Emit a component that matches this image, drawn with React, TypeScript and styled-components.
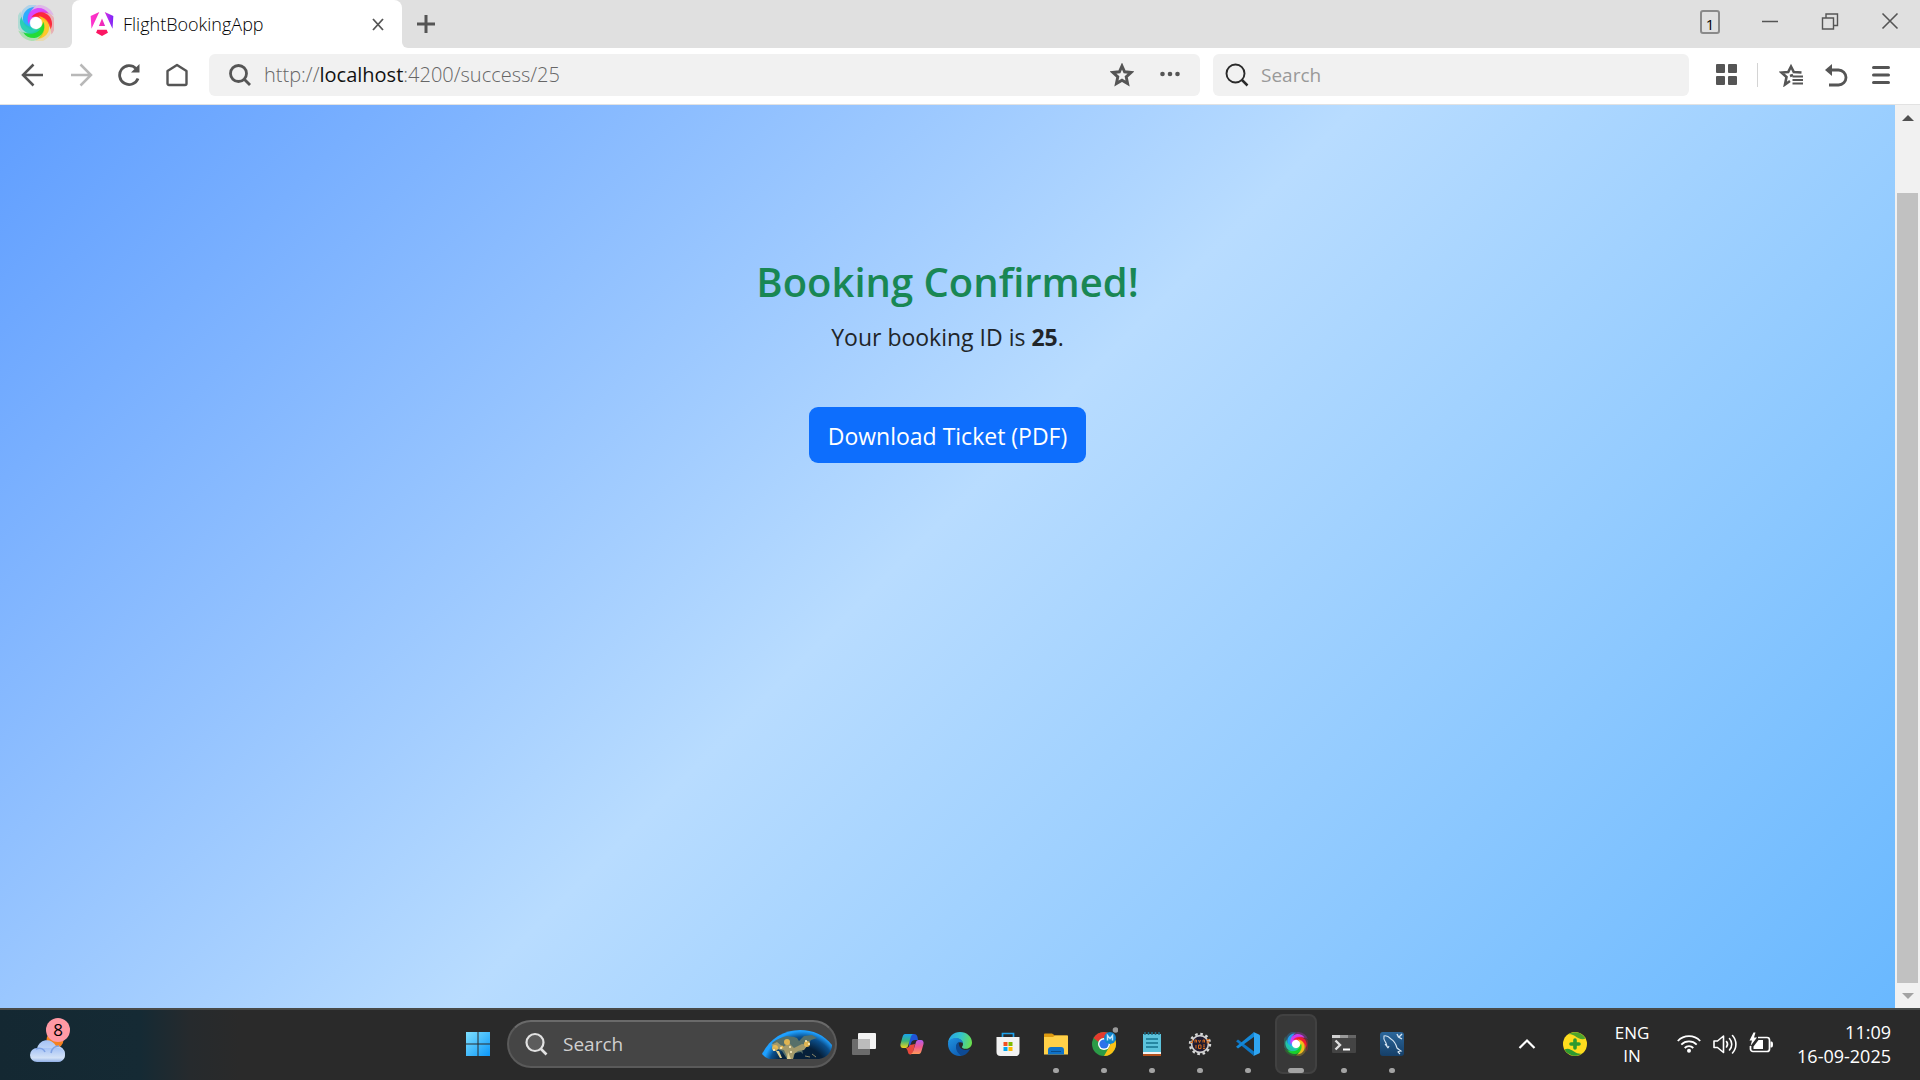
import React from "react";
import styled, { createGlobalStyle, css } from "styled-components";

const uiFont = '"Open Sans", "Noto Sans", sans-serif';

const GlobalStyle = createGlobalStyle`
  *, *::before, *::after { box-sizing: border-box; }
  body { margin: 0; font-family: ${uiFont}; }
  button, input { font: inherit; color: inherit; }
  svg { display: block; flex: none; }
`;

const Screen = styled.div`
  display: flex;
  flex-direction: column;
  height: 100vh;
  overflow: hidden;
`;

const PlainButton = styled.button`
  display: flex;
  align-items: center;
  justify-content: center;
  padding: 0;
  border: 0;
  background: none;
  cursor: pointer;
`;

/* ---------- Tab strip ---------- */

const TabStrip = styled.header`
  display: flex;
  height: 48px;
  background: #ffffff;
`;

const LogoCell = styled(PlainButton)`
  width: 72px;
  background: #e0e0e0;
  border-bottom-right-radius: 6px;
  padding-bottom: 2px;
`;

const Tab = styled.div`
  display: flex;
  align-items: center;
  width: 330px;
  padding: 0 12px 0 18px;
  background: #ffffff;
  border-radius: 8px 8px 0 0;
`;

const TabSlot = styled.div`
  display: flex;
  background: linear-gradient(#e0e0e0 50%, #ffffff 50%);
`;

const TabTitle = styled.span`
  flex: 1;
  margin-left: 9px;
  font-size: 18px;
  font-weight: 300;
  line-height: 24px;
  color: #000000;
`;

const StripRest = styled.div`
  display: flex;
  flex: 1;
  justify-content: space-between;
  background: #e0e0e0;
  border-bottom-left-radius: 6px;
`;

const StripButton = styled(PlainButton)`
  width: 48px;
`;

const WindowControls = styled.div`
  display: flex;
  height: 44px;
  align-items: center;
`;

const WindowButton = styled(PlainButton)`
  width: 60px;
  height: 44px;
`;

const TabCount = styled.span`
  display: flex;
  align-items: center;
  justify-content: center;
  width: 20px;
  height: 24px;
  padding-top: 4px;
  border: 2px solid #8a8a8a;
  border-radius: 3px;
  font-size: 15px;
  line-height: 16px;
  color: #000000;
`;

/* ---------- Toolbar ---------- */

const Toolbar = styled.nav`
  display: flex;
  align-items: center;
  height: 57px;
  padding: 0 17px 3px 9px;
  background: #ffffff;
  border-bottom: 1px solid #e2e2e2;
`;

const NavButton = styled(PlainButton)`
  width: 48px;
  height: 42px;
`;

const ToolButton = styled(PlainButton)`
  width: 45px;
  height: 42px;
`;

const Field = styled.div<{ $grow: number }>`
  display: flex;
  align-items: center;
  flex: ${(p) => p.$grow} 1 0;
  height: 42px;
  border-radius: 6px;
  background: #f1f1f1;
`;

const AddressField = styled(Field)`
  margin: 0 13px 0 8px;
  padding: 0 6px 0 19px;
`;

const Address = styled.div`
  flex: 1;
  margin-left: 12px;
  font-size: 20px;
  font-weight: 300;
  line-height: 28px;
  color: #666666;
  white-space: nowrap;
  outline: none;
`;

const Host = styled.span`
  color: #111111;
  font-weight: 400;
`;

const SearchField = styled(Field)`
  padding-left: 12px;
  margin-right: 14px;
`;

const SearchInput = styled.input`
  flex: 1;
  min-width: 0;
  margin-left: 12px;
  padding: 0;
  border: 0;
  outline: 0;
  background: none;
  font-size: 19px;
  line-height: 28px;
  &::placeholder { color: #999999; opacity: 1; }
`;

const Divider = styled.span`
  width: 1px;
  height: 24px;
  margin: 0 10px 0 6px;
  background: #d4d4d4;
`;

/* ---------- Page ---------- */

const Viewport = styled.div`
  display: flex;
  flex: 1;
  min-height: 0;
`;

const Page = styled.main`
  display: flex;
  flex: 1;
  flex-direction: column;
  align-items: center;
  padding-top: 141px;
  background: linear-gradient(135deg, #5a9aff, #b8dcff, #69b8ff) bottom / 100% calc(100% + 82px);
`;

const Heading = styled.h1`
  margin: 0;
  font-size: 40px;
  font-weight: 600;
  line-height: 72px;
  color: #198754;
`;

const Message = styled.p`
  margin: 0;
  font-size: 23px;
  line-height: 38px;
  color: #212529;
`;

const DownloadButton = styled.button`
  height: 56px;
  margin-top: 51px;
  padding: 2px 19px 0;
  border: 0;
  border-radius: 9px;
  background: #0d6efd;
  color: #ffffff;
  font-size: 23px;
  line-height: 38px;
  cursor: pointer;
`;

const ScrollBar = styled.div`
  display: flex;
  flex-direction: column;
  align-items: center;
  width: 25px;
  background: #f1f1f1;
`;

const ScrollArrow = styled(PlainButton)`
  width: 25px;
  height: 25px;
`;

const ScrollTrack = styled.div`
  display: flex;
  flex: 1;
  align-items: flex-end;
`;

const ScrollThumb = styled.div`
  width: 21px;
  height: 92.6%;
  background: #c1c1c1;
`;

/* ---------- Taskbar ---------- */

const Taskbar = styled.footer`
  display: grid;
  grid-template-columns: 1fr auto 1fr;
  height: 72px;
  padding-bottom: 2px;
  border-top: 2px solid #484a49;
  background: linear-gradient(90deg, #142832 0, #152a34 140px, #262a2d 190px, #2a2a2a 240px);
  color: #ffffff;
`;

const WeatherArea = styled.div`
  display: flex;
  padding-left: 24px;
`;

const WeatherButton = styled(PlainButton)`
  position: relative;
  width: 48px;
`;

const WeatherBadge = styled.span`
  position: absolute;
  top: 8px;
  left: 22px;
  width: 24px;
  height: 24px;
  border-radius: 50%;
  background: #ff99a4;
  color: #000000;
  font-size: 17px;
  line-height: 24px;
  text-align: center;
`;

const AppList = styled.div`
  display: flex;
  align-items: center;
  margin-right: 50px;
`;

const activeTile = css`
  &::before {
    content: "";
    position: absolute;
    inset: 4px 3px;
    border: 2px solid #414141;
    border-radius: 8px;
    background: #383838;
  }
`;

const AppButton = styled(PlainButton)<{ $state?: "open" | "active" }>`
  position: relative;
  width: 48px;
  height: 68px;
  ${(p) => p.$state === "active" && activeTile}
  &::after {
    content: "";
    display: ${(p) => (p.$state ? "block" : "none")};
    position: absolute;
    bottom: 5px;
    width: ${(p) => (p.$state === "active" ? 16 : 6)}px;
    height: 5px;
    border-radius: 3px;
    background: #a3a3a3;
  }
  svg { position: relative; }
`;

const TaskSearch = styled.label`
  display: flex;
  align-items: center;
  width: 330px;
  height: 48px;
  margin: 0 3px 0 5px;
  padding: 0 3px 0 15px;
  border: 2px solid #5a5a5a;
  border-top-color: #6a6a6a;
  border-radius: 24px;
  background: #454545;
`;

const TaskSearchInput = styled.input`
  flex: 1;
  min-width: 0;
  margin-left: 15px;
  padding: 0;
  border: 0;
  outline: 0;
  background: none;
  font-size: 19px;
  line-height: 28px;
  &::placeholder { color: #d0d0d0; opacity: 1; }
`;

const Tray = styled.div`
  display: flex;
  align-items: center;
  justify-content: flex-end;
  padding-right: 29px;
`;

const TrayButton = styled(PlainButton)<{ $width: number }>`
  width: ${(p) => p.$width}px;
  height: 60px;
`;

const Language = styled(TrayButton)`
  margin-right: 6px;
  flex-direction: column;
  font-size: 17px;
  line-height: 23px;
`;

const Clock = styled(Language)`
  margin-right: 0;
  align-items: flex-end;
  font-size: 18px;
  line-height: 24px;
  white-space: nowrap;
`;

/* ---------- Icons ---------- */

const ink = "#555555";

const SwirlLogo = ({ size, id }: { size: number; id: string }) => (
  <svg width={size} height={size} viewBox="0 0 36 36" aria-hidden="true">
    <defs>
      <radialGradient id={id}>
        <stop offset="0.5" stopColor="#fff" />
        <stop offset="1" stopColor="#fff" stopOpacity="0" />
      </radialGradient>
    </defs>
    <circle cx="18" cy="18" r="8" fill="#ffffff" />
    {["#1ea8ff", "#d93cff", "#ff1a30", "#ffc61a", "#16dc28", "#1fcdb0"].map((c, i) => (
      <g key={c} fill={c} transform={`rotate(${i * 60 - 62} 18 18)`}>
        <path fillOpacity="0.25" d="M10 18C8 9 13 1 22 0 29 1 34 5 36 11 30 8 23 7 18 12 15 12 12 14 10 18Z" />
        <path fillOpacity="0.9" d="M10.500 19C8 10 13 4 20 3 25 3 29 5 31 9 26 7 20 8 17 12 14 13 12 15 10.500 19Z" />
      </g>
    ))}
    <circle cx="18" cy="18" r="7" fill={`url(#${id})`} />
  </svg>
);

const AngularIcon = () => (
  <svg width="24" height="24" viewBox="0 0 24 24" aria-hidden="true">
    <defs>
      <linearGradient id="ng" x1="0" y1="0" x2="24" y2="0" gradientUnits="userSpaceOnUse">
        <stop offset="0" stopColor="#ff35d2" />
        <stop offset="0.5" stopColor="#f52ab4" />
        <stop offset="0.75" stopColor="#b52cf0" />
        <stop offset="1" stopColor="#7024f8" />
      </linearGradient>
    </defs>
    <path fill="url(#ng)" d="M14.692 0l7.832 16.855.814-12.856L14.692 0ZM9.308 0 .662 3.999l.814 12.856L9.308 0ZM8.903 13.930h6.198L12 6.396 8.903 13.930Z" />
    <path fill="#fb1763" d="M16.712 17.711H7.288l-1.204 2.916L12 24l5.916-3.373-1.204-2.916Z" />
  </svg>
);

const Glyph = ({ size = 24, w = 2, color = ink, children }: { size?: number; w?: number; color?: string; children: React.ReactNode }) => (
  <svg width={size} height={size} viewBox="0 0 24 24" fill="none" stroke={color} strokeWidth={w} aria-hidden="true">
    {children}
  </svg>
);

const CloudIcon = () => (
  <svg width="38" height="38" viewBox="0 0 38 38" aria-hidden="true">
    <defs>
      <linearGradient id="cloud" x1="0" y1="0" x2="0" y2="1">
        <stop offset="0" stopColor="#a5c2f5" />
        <stop offset="0.7" stopColor="#d3e2f7" />
        <stop offset="1" stopColor="#8eaee6" />
      </linearGradient>
    </defs>
    <circle cx="26" cy="15" r="8.500" fill="#f58220" />
    <path fill="url(#cloud)" d="M10 37a9 9 0 0 1-2-13A10 10 0 0 1 27 21a8 8 0 0 1 9 8 8 8 0 0 1-8 8Z" />
    <rect x="1" y="23" width="35" height="14" rx="7" fill="url(#cloud)" />
    <path d="M22 28c1-5 4-7 8-7M7 24c4-2 8 0 9 3" fill="none" stroke="#7ea2e4" strokeWidth="1.500" />
  </svg>
);

const WindowsIcon = () => (
  <svg width="24" height="24" viewBox="0 0 24 24" aria-hidden="true">
    <defs>
      <linearGradient id="win" x1="0" y1="0" x2="24" y2="24" gradientUnits="userSpaceOnUse">
        <stop offset="0" stopColor="#7fe0ff" />
        <stop offset="1" stopColor="#0c97f8" />
      </linearGradient>
    </defs>
    <path fill="url(#win)" d="M0 0h11.500v11.500H0zM12.500 0H24v11.500H12.500zM0 12.500h11.500V24H0zM12.500 12.500H24V24H12.500z" />
  </svg>
);

const EarthIcon = () => (
  <svg width="70" height="30" viewBox="0 0 70 30" aria-hidden="true">
    <defs>
      <radialGradient id="sea" gradientUnits="userSpaceOnUse" cx="40" cy="42" r="40">
        <stop offset="0.6" stopColor="#06203a" />
        <stop offset="0.85" stopColor="#0b4f8c" />
        <stop offset="1" stopColor="#1fa0ff" />
      </radialGradient>
    </defs>
    <path fill="url(#sea)" d="M0 25C8 9 22 1 38 1c13 0 24 5 32 15 0 6-5 13-13 14H7C4 29 2 27 0 25Z" />
    <path fill="#56706a" d="M10 14c5-4 10-6 15-7 4 1 6 0 10 2l2 3 5-5 8-1 5 3-6 2-3 5-3 3-3 1 1 5-2-2-6 1-2 6h-6l-5-8-7-3Z" />
    <path fill="#a39a6b" d="m9 16 6-3 6 5 6-4 5 5 8-4 6 1-4 5-6 1-4 3-1 5h-5l-4-9-6-1Z" />
    <path fill="#e0cf93" d="m14 22 4 7h2l-3-7ZM26 23l3 7h-4Z" />
    <g fill="#f6c04d" fillOpacity="0.85">
      <circle cx="13" cy="19" r="3" />
      <circle cx="25" cy="13" r="3" />
      <circle cx="45" cy="15" r="3" />
      <circle cx="20" cy="18" r="1.500" />
    </g>
    <g fill="#fff2c4">
      <circle cx="12" cy="21" r="1" /><circle cx="19" cy="19" r="1" /><circle cx="28" cy="18" r="1" />
      <circle cx="29" cy="23" r="1" /><circle cx="44" cy="12" r="1" /><circle cx="47" cy="15" r="1" />
    </g>
    <path d="M43 27l5 1M50 25l4 3" stroke="#8a8668" />
  </svg>
);

const TaskViewIcon = () => (
  <svg width="24" height="22" viewBox="0 0 24 22" aria-hidden="true">
    <rect x="6" width="18" height="16" rx="1" fill="#f4f4f4" />
    <rect y="6" width="18" height="16" rx="1" fill="#777777" fillOpacity="0.85" />
    <path d="M6 6h12v10H6z" fill="#bcbcbc" />
  </svg>
);

const CopilotIcon = () => (
  <svg width="24" height="22" viewBox="0 0 24 22" aria-hidden="true">
    <defs>
      <linearGradient id="cpA" x1="0" y1="0" x2="0" y2="1">
        <stop offset="0" stopColor="#18a4ee" />
        <stop offset="0.5" stopColor="#3bb37a" />
        <stop offset="1" stopColor="#f2d21c" />
      </linearGradient>
      <linearGradient id="cpB" x1="0" y1="0" x2="0" y2="1">
        <stop offset="0" stopColor="#b15cf0" />
        <stop offset="0.5" stopColor="#f0588c" />
        <stop offset="1" stopColor="#ff9a5a" />
      </linearGradient>
    </defs>
    <path fill="#1f55d8" d="M9 1h5c2 0 3 1 3.500 3L18 7h-3c-2 0-3 1-3.500 2L9 15Z" />
    <path fill="url(#cpA)" d="M5 1h9c-2 0-3 2-3.500 4L8 13c-.5 1.500-1.500 2-3 2H3c-2 0-3-2-2.500-4L2.500 4C3 2 4 1 5 1Z" />
    <path fill="#e8483c" d="M6 15c2 0 3-1 4-3l5-1-2 8c-.5 2-2 2.500-3 2.500C8 21 8 19 7.500 17.500Z" />
    <path fill="url(#cpB)" d="M19 21h-9c2 0 3-2 3.500-4L16 9c.5-1.500 1.500-2 3-2h2c2 0 3 2 2.500 4l-2 7c-.5 2-1.500 3-2.500 3Z" />
  </svg>
);

const EdgeIcon = () => (
  <svg width="24" height="24" viewBox="0 0 24 24" aria-hidden="true">
    <defs>
      <linearGradient id="edA" x1="0" y1="0.4" x2="1" y2="0.6">
        <stop offset="0" stopColor="#27a4e8" />
        <stop offset="0.5" stopColor="#35c5c9" />
        <stop offset="1" stopColor="#6be04a" />
      </linearGradient>
      <linearGradient id="edB" x1="0" y1="0" x2="0.6" y2="1">
        <stop offset="0" stopColor="#2193e0" />
        <stop offset="1" stopColor="#0f62b8" />
      </linearGradient>
    </defs>
    <path fill="url(#edA)" d="M0 11C.6 4.500 5.600 0 12 0c7 0 12 5 12 10.500 0 4-3 6.300-6.300 6.300-2.400 0-3.700-.8-3.700-1.800 0-.7 1-1.200 1-3C15 9 12 6.500 8.500 6.500 4.500 6.500 1.500 8.500 0 11Z" />
    <path fill="url(#edB)" d="M0 12c0-4 4-6 8-6 4 0 6.500 2.500 7 5-1.500-1.500-6.500-1.500-6.500 3.500 0 5 4 8.500 6 9C7 25.500 0 20 0 12Z" />
    <path fill="#0d4a94" d="M8 15c0-3 1.500-4.500 3-5.200-1 4.200 2 8.200 6.500 8.200 2.500 0 4-1 4.800-1.200C20.500 20.500 17 23.500 14 23.800 11 22.500 8 19 8 15Z" />
  </svg>
);

const StoreIcon = () => (
  <svg width="24" height="24" viewBox="0 0 24 24" aria-hidden="true">
    <path d="M6.500 6V1.500h11V6" fill="none" stroke="#1ea2ec" strokeWidth="1.700" />
    <path fill="#f2f2f2" d="M.5 5h23v15a4 4 0 0 1-4 4h-15a4 4 0 0 1-4-4Z" />
    <path fill="#f25022" d="M7.500 10h4v4h-4z" />
    <path fill="#7fba00" d="M12.500 10h4v4h-4z" />
    <path fill="#00a4ef" d="M7.500 15h4v4h-4z" />
    <path fill="#ffb900" d="M12.500 15h4v4h-4z" />
  </svg>
);

const FolderIcon = () => (
  <svg width="24" height="22" viewBox="0 0 24 22" aria-hidden="true">
    <path fill="#dd9a10" d="M0 1.500C0 .7.500.5 1 .5h7l3 2h12c.6 0 1 .4 1 1V8H0Z" />
    <path fill="#ffd048" d="M0 4h9l2-1.500h12c.6 0 1 .5 1 1V21.500H0Z" />
    <path fill="#0f72c8" d="M4 17c0-2 1-3 3-3h10c2 0 3 1 3 3v4.500H4Z" />
    <path d="M7 18.500h10" stroke="#0a4c88" />
  </svg>
);

const ChromeIcon = () => (
  <svg width="28" height="34" viewBox="0 0 28 34" aria-hidden="true">
    <circle cx="14" cy="17" r="12" fill="#2b9b47" />
    <path fill="#e33b2e" d="M3.600 11A12 12 0 0 1 24.400 11H14a6 6 0 0 0-5.500 4Z" />
    <path fill="#fbc116" d="M24.400 11A12 12 0 0 1 14 29l5.200-9A6 6 0 0 0 17 11Z" />
    <circle cx="14" cy="17" r="6" fill="#ffffff" />
    <circle cx="14" cy="17" r="4.600" fill="#2c73ea" />
    <circle cx="20" cy="11" r="6" fill="#0f86cf" />
    <path d="M17.500 13.500v-5l2.500 3 2.500-3v5" fill="none" stroke="#bfe4fa" strokeWidth="1.500" />
    <circle cx="25.500" cy="3" r="2.800" fill="#9b9b9b" />
  </svg>
);

const NotepadIcon = () => (
  <svg width="20" height="24" viewBox="0 0 20 24" aria-hidden="true">
    <path fill="#b4511c" d="M1 20h18v4H1z" />
    <path fill="#f3f3f3" d="M1 18h18v4H1z" />
    <path fill="#5cc3dc" d="M1 2h18v18H1z" />
    <path d="M3 0v3M6.500 0v3M10 0v3M13.500 0v3M17 0v3" stroke="#1f6f88" strokeWidth="1.500" />
    <path d="M4 7h12M4 11h12M4 15h12" stroke="#15748f" strokeWidth="1.500" />
  </svg>
);

const JavaIdeIcon = () => (
  <svg width="24" height="24" viewBox="0 0 24 24" aria-hidden="true">
    <circle cx="12" cy="12" r="10" fill="none" stroke="#d8d8d8" strokeWidth="2.400" strokeDasharray="2.600 2.636" />
    <circle cx="12" cy="12" r="8.400" fill="#221c30" stroke="#cfcfcf" strokeWidth="1.600" />
    <path d="M4.500 7.500v3H2.500M7 10.500V8h1.500v2.500M10.500 8l1 2.500 1-2.500M15 10.500V8h1.500v2.500M18.500 7.500h3M18.500 9.200h3M18.500 10.800h3M8 13v3.500M10.500 13v3.500h2.500V13ZM15 13h2M15 14.800h2M15 16.500h2" fill="none" stroke="#d46a1c" strokeWidth="1" />
  </svg>
);

const CodeIcon = () => (
  <svg width="24" height="24" viewBox="0 0 24 24" aria-hidden="true">
    <path fill="#0d76c4" d="M0 9.200 2 7.400l16 12-.2 4.400Z" />
    <path fill="#1488d8" d="M0 14.800 2 16.600 18.500 4.500 17.800.2Z" />
    <path fill="#2fa5f2" d="M17.500 0 23 2.500c.6.300 1 .8 1 1.500v16c0 .7-.4 1.200-1 1.500L17.500 24c-.6 0 .5-.5.5-1.500v-21c0-1-1-1.500-.5-1.500Z" />
  </svg>
);

const TerminalIcon = () => (
  <svg width="24" height="18" viewBox="0 0 24 18" aria-hidden="true">
    <rect width="24" height="18" rx="1" fill="#444444" />
    <path fill="#d0d0d0" d="M0 0h8v3H0z" />
    <path fill="#999999" d="M8 0h8v3H8z" />
    <path fill="#666666" d="M16 0h8v3h-8z" />
    <path d="m3.500 5.500 4.500 4.500-4.500 4.500" fill="none" stroke="#dedede" strokeWidth="2.400" />
    <path d="M11 14.500h7" stroke="#ffffff" strokeWidth="2" />
  </svg>
);

const MySqlIcon = () => (
  <svg width="24" height="24" viewBox="0 0 24 24" aria-hidden="true">
    <defs>
      <linearGradient id="sql" x1="0" y1="0" x2="0" y2="1">
        <stop offset="0" stopColor="#2c679b" />
        <stop offset="1" stopColor="#153f68" />
      </linearGradient>
    </defs>
    <rect width="24" height="24" rx="3" fill="url(#sql)" />
    <path d="M8 16c-1-1-1.500-3-2-5-1-2-3-4-2-7 3-1 5 1 7 3 3 2 5 5 6 9 1 1 3 2 4 3-2 0-3 0-3 1l2 2M8 16l-3-4M8 16l1-2" fill="none" stroke="#d6e5f2" strokeWidth="1.100" />
    <path d="m17 2 1.500 3L22 7M19 5l3-3" fill="none" stroke="#d6e5f2" strokeWidth="1.400" />
  </svg>
);

const PlusBallIcon = () => (
  <svg width="24" height="24" viewBox="0 0 24 24" aria-hidden="true">
    <circle cx="12" cy="12" r="12" fill="#ffdc1e" />
    <path fill="#4fa52c" d="M5 2.500A12 12 0 0 1 22.500 6.500C19 8.500 15 6 12 4 9.500 2.500 7 2 5 2.500Z" />
    <path fill="#2e9a30" d="M1.500 17.500c3.500-2 6.500 0 9.500 2 3 2 5.500 2.500 8 2A12 12 0 0 1 1.500 17.500Z" />
    <path d="M12 8v8M8 12h8" stroke="#2e9a30" strokeWidth="3.600" strokeLinecap="round" />
  </svg>
);

const apps: { name: string; icon: React.ReactNode; state?: "open" | "active" }[] = [
  { name: "Task view", icon: <TaskViewIcon /> },
  { name: "Copilot", icon: <CopilotIcon /> },
  { name: "Edge", icon: <EdgeIcon /> },
  { name: "Store", icon: <StoreIcon /> },
  { name: "File Explorer", icon: <FolderIcon />, state: "open" },
  { name: "Chrome", icon: <ChromeIcon />, state: "open" },
  { name: "Notepad", icon: <NotepadIcon />, state: "open" },
  { name: "Java EE IDE", icon: <JavaIdeIcon />, state: "open" },
  { name: "VS Code", icon: <CodeIcon />, state: "open" },
  { name: "Browser", icon: <SwirlLogo size={24} id="swirlTask" />, state: "active" },
  { name: "Terminal", icon: <TerminalIcon />, state: "open" },
  { name: "MySQL Workbench", icon: <MySqlIcon />, state: "open" },
];

const BrowserTabs = () => (
  <TabStrip>
    <LogoCell aria-label="Browser menu">
      <SwirlLogo size={36} id="swirlTab" />
    </LogoCell>
    <TabSlot>
      <Tab>
        <AngularIcon />
        <TabTitle>FlightBookingApp</TabTitle>
        <PlainButton aria-label="Close tab">
          <Glyph w={1.8}><path d="m7 7 10 11M17 7 7 18" /></Glyph>
        </PlainButton>
      </Tab>
    </TabSlot>
    <StripRest>
      <StripButton aria-label="New tab">
        <Glyph w={3}><path d="M12 3v18M3 12h18" /></Glyph>
      </StripButton>
      <WindowControls>
        <WindowButton aria-label="Tab count"><TabCount>1</TabCount></WindowButton>
        <WindowButton aria-label="Minimize">
          <Glyph w={1.5}><path d="M4 11.500h16" /></Glyph>
        </WindowButton>
        <WindowButton aria-label="Restore">
          <Glyph w={1.4}><path d="M4.500 8h11v11h-11zM8 8V4h11.500v11.500H16" /></Glyph>
        </WindowButton>
        <WindowButton aria-label="Close">
          <Glyph w={1.600}><path d="m4.500 3.500 15 15M19.500 3.500l-15 15" /></Glyph>
        </WindowButton>
      </WindowControls>
    </StripRest>
  </TabStrip>
);

const BrowserToolbar = () => (
  <Toolbar>
    <NavButton aria-label="Back">
      <Glyph w={2.500}><path d="M22 12H3M12.500 1.500 2 12l10.500 10.500" /></Glyph>
    </NavButton>
    <NavButton aria-label="Forward">
      <Glyph w={2.500} color="#b8b8b8"><path d="M2 12h19M11.500 1.500 22 12 11.500 22.500" /></Glyph>
    </NavButton>
    <NavButton aria-label="Reload">
      <Glyph w={2.800}>
        <path d="M21 15.500A9.500 9.500 0 1 1 19 5.500" />
        <path d="M22.500 1v8.500H14Z" fill={ink} stroke="none" />
      </Glyph>
    </NavButton>
    <NavButton aria-label="Home">
      <Glyph w={2.400}><path d="M2.500 8 12 2l9.500 6v12.500c0 .8-.7 1.500-1.500 1.500H4c-.8 0-1.500-.7-1.500-1.500Z" strokeLinejoin="round" /></Glyph>
    </NavButton>
    <AddressField $grow={991}>
      <Glyph w={2.800}>
        <circle cx="10.500" cy="10.500" r="8" />
        <path d="m16 16 6 6" />
      </Glyph>
      <Address role="textbox" aria-label="Address" contentEditable suppressContentEditableWarning spellCheck={false}>
        http://<Host>localhost</Host>:4200/success/25
      </Address>
      <NavButton aria-label="Bookmark">
        <Glyph w={2.900}><path d="m12 3 2.600 5.800 6.400.7-4.800 4.300 1.400 6.700L12 17.200l-5.600 3.300 1.400-6.700L3 9.500l6.400-.7Z" /></Glyph>
      </NavButton>
      <NavButton aria-label="More">
        <Glyph>
          <g fill={ink} stroke="none"><circle cx="4.500" cy="11" r="2.300" /><circle cx="12" cy="11" r="2.300" /><circle cx="19.500" cy="11" r="2.300" /></g>
        </Glyph>
      </NavButton>
    </AddressField>
    <SearchField $grow={476}>
      <Glyph w={1.900} color="#2a2a2a">
        <circle cx="10.500" cy="10.500" r="9" />
        <path d="m17 17 5.500 5.500" strokeWidth="2.500" />
      </Glyph>
      <SearchInput aria-label="Search the web" placeholder="Search" />
    </SearchField>
    <NavButton aria-label="Apps">
      <Glyph>
        <g fill={ink} stroke="none">
          <rect x="1" y="1" width="9" height="9" rx="1" /><rect x="13" y="1" width="9" height="9" rx="1" />
          <rect x="1" y="13" width="9" height="9" rx="1" /><rect x="13" y="13" width="9" height="9" rx="1" />
        </g>
      </Glyph>
    </NavButton>
    <Divider />
    <ToolButton aria-label="Favorites">
      <Glyph w={2.600}>
        <path d="M22.500 9.500 14.800 9 12 3.500 9.200 9 2.500 9.500 7.500 14 6 21.500l5-3.500M11 13l3-1" />
        <path d="M13.500 13.500H24M13.500 17H24M13.500 20.500H24" strokeWidth="2.200" />
      </Glyph>
    </ToolButton>
    <ToolButton aria-label="Undo close tab">
      <Glyph w={2.800}>
        <path d="M5 7h9.500a7.500 7.500 0 0 1 0 15H5" />
        <path d="M8 1v12L1 7Z" fill={ink} stroke="none" />
      </Glyph>
    </ToolButton>
    <ToolButton aria-label="Menu">
      <Glyph w={3}><path d="M4.500 4.500h15M4.500 12h15M4.500 19.500h15" strokeLinecap="round" /></Glyph>
    </ToolButton>
  </Toolbar>
);

const SystemTaskbar = () => (
  <Taskbar>
    <WeatherArea>
      <WeatherButton aria-label="Weather">
        <CloudIcon />
        <WeatherBadge>8</WeatherBadge>
      </WeatherButton>
    </WeatherArea>
    <AppList>
      <AppButton aria-label="Start"><WindowsIcon /></AppButton>
      <TaskSearch>
        <Glyph w={2.200} color="#e2e2e2">
          <circle cx="11" cy="10.500" r="8.500" fill="#5c5c5c" />
          <path d="m17 17 5.500 5.500" strokeWidth="2.600" />
        </Glyph>
        <TaskSearchInput aria-label="Search Windows" placeholder="Search" />
        <EarthIcon />
      </TaskSearch>
      {apps.map((app) => (
        <AppButton key={app.name} aria-label={app.name} $state={app.state}>{app.icon}</AppButton>
      ))}
    </AppList>
    <Tray>
      <TrayButton $width={48} aria-label="Hidden icons">
        <Glyph w={2.200} color="#ffffff"><path d="m4.500 16 7.500-7.500 7.500 7.500" /></Glyph>
      </TrayButton>
      <TrayButton $width={48} aria-label="Antivirus"><PlusBallIcon /></TrayButton>
      <Language $width={66}>
        <span>ENG</span>
        <span>IN</span>
      </Language>
      <TrayButton $width={36} aria-label="Wi-Fi">
        <Glyph w={1.800} color="#ffffff">
          <path d="M.8 9a15.500 15.500 0 0 1 22.400 0M4.300 12.600a10.800 10.800 0 0 1 15.400 0M7.700 16a6 6 0 0 1 8.600 0" />
          <circle cx="12" cy="18.800" r="2" fill="#ffffff" stroke="none" />
        </Glyph>
      </TrayButton>
      <TrayButton $width={36} aria-label="Volume">
        <Glyph w={1.600} color="#ffffff">
          <path d="M1 9v6.500h3.500l6 5V4l-6 5Z" strokeLinejoin="round" />
          <path d="M13.500 9.500a4.500 4.500 0 0 1 0 5.500M16.500 6.500a8.500 8.500 0 0 1 0 11.500M19.500 3.500a13 13 0 0 1 0 17.500" strokeLinecap="round" />
        </Glyph>
      </TrayButton>
      <TrayButton $width={36} aria-label="Battery">
        <Glyph w={1.700} color="#ffffff">
          <path d="M9 5.500h9a2.500 2.500 0 0 1 2.500 2.500v9a2.500 2.500 0 0 1-2.500 2.500H4A2.500 2.500 0 0 1 1.500 17v-3" />
          <path d="M9.500 8H14v9H4.500v-2.500ZM21.500 9.500h1c1 0 1.500 1 1.500 3s-.5 3-1.500 3h-1ZM4.500.5.500 8.500H3L1.500 14 8 5.500H5L6.500.5Z" fill="#ffffff" stroke="none" />
        </Glyph>
      </TrayButton>
      <Clock $width={112}>
        <span>11:09</span>
        <span>16-09-2025</span>
      </Clock>
    </Tray>
  </Taskbar>
);

export default function App() {
  return (
    <Screen>
      <GlobalStyle />
      <BrowserTabs />
      <BrowserToolbar />
      <Viewport>
        <Page>
          <Heading>Booking Confirmed!</Heading>
          <Message>Your booking ID is <strong>25</strong>.</Message>
          <DownloadButton>Download Ticket (PDF)</DownloadButton>
        </Page>
        <ScrollBar>
          <ScrollArrow aria-label="Scroll up">
            <svg width="12" height="6" viewBox="0 0 12 6" aria-hidden="true"><path d="M0 6 6 0l6 6Z" fill="#505050" /></svg>
          </ScrollArrow>
          <ScrollTrack><ScrollThumb /></ScrollTrack>
          <ScrollArrow aria-label="Scroll down">
            <svg width="12" height="6" viewBox="0 0 12 6" aria-hidden="true"><path d="M0 0h12L6 6Z" fill="#a3a3a3" /></svg>
          </ScrollArrow>
        </ScrollBar>
      </Viewport>
      <SystemTaskbar />
    </Screen>
  );
}
